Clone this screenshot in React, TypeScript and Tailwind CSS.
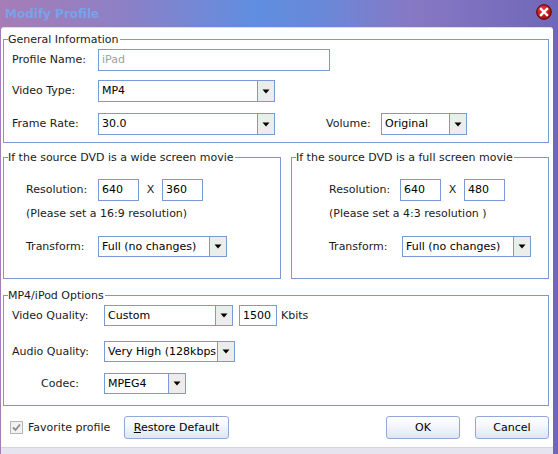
import React from "react";

const font = { fontFamily: '"DejaVu Sans", Verdana, sans-serif' };

function Arrow() {
  return (
    <svg width="8" height="5" viewBox="0 0 8 5">
      <polygon points="0.5,0.5 7.5,0.5 4,4.5" fill="#000" />
    </svg>
  );
}

function Select({ w, h, text }: { w: string; h: string; text: string }) {
  return (
    <div className={`flex border border-[#7a9ad6] bg-white ${w} ${h}`}>
      <div className="flex-1 overflow-hidden whitespace-nowrap pl-[3px] flex items-center text-[11px] text-black">{text}</div>
      <div className="w-[17px] shrink-0 bg-[#ececec] border-l border-[#7a9ad6] flex items-center justify-center">
        <Arrow />
      </div>
    </div>
  );
}

function Input({ w, h, text, gray }: { w: string; h: string; text: string; gray?: boolean }) {
  return (
    <div className={`flex items-center border border-[#7a9ad6] bg-white pl-[3px] text-[11px] ${w} ${h} ${gray ? "text-[#a0a0a0]" : "text-black"}`}>
      {text}
    </div>
  );
}

function Group({ title, className, children }: { title: string; className: string; children: React.ReactNode }) {
  return (
    <div className={`relative border border-[#7b98d4] ${className}`}>
      <span className="absolute left-[4px] top-[-7px] bg-white pr-[1px] text-[11px] leading-[14px] text-[#1a1a1a]">{title}</span>
      {children}
    </div>
  );
}

function Button({ w, children }: { w: string; children: React.ReactNode }) {
  return (
    <div className={`h-[23px] ${w} rounded-[3px] border border-[#8fa9d9] bg-[linear-gradient(180deg,#ffffff_0%,#f3f6fb_45%,#dde6f4_100%)] flex items-center justify-center text-[11px] text-black`}>
      {children}
    </div>
  );
}

export default function App() {
  return (
    <div style={font} className="w-[558px] h-[454px] overflow-hidden flex flex-col bg-[linear-gradient(90deg,#a67db6_0%,#8d80c6_22%,#5f8ee0_46%,#6a88d8_58%,#8778c4_74%,#6f67b8_100%)]">
      {/* Title bar */}
      <div className="h-[27px] shrink-0 flex items-center justify-between pl-[5px] pr-[6px]">
        <span className="text-[12px] font-bold text-[#78a2ea] leading-none">Modify Profile</span>
        <svg width="16" height="16" viewBox="0 0 16 16" className="mb-[3px]">
          <defs>
            <radialGradient id="rg" cx="40%" cy="35%" r="70%">
              <stop offset="0%" stopColor="#f04040" />
              <stop offset="100%" stopColor="#a00808" />
            </radialGradient>
          </defs>
          <circle cx="8" cy="8" r="7.3" fill="url(#rg)" stroke="#600000" strokeWidth="1" />
          <path d="M5 5 L11 11 M11 5 L5 11" stroke="#fff" strokeWidth="2.4" strokeLinecap="square" />
        </svg>
      </div>

      {/* Body */}
      <div className="ml-[1px] w-[552px] h-[420px] shrink-0 bg-white rounded-t-[3px] border-t border-[#dcdce8] pl-[2px] pr-[4px] pt-[11px] text-[11px] text-[#1a1a1a] leading-[14px]">
        {/* General Information */}
        <Group title="General Information" className="h-[104px] w-[546px]">
          <div className="pt-[9px] pl-[8px]">
            <div className="flex items-center">
              <span className="w-[86px]">Profile Name:</span>
              <Input w="w-[232px]" h="h-[22px]" text="iPad" gray />
            </div>
            <div className="flex items-center mt-[9px]">
              <span className="w-[86px]">Video Type:</span>
              <Select w="w-[177px]" h="h-[22px]" text="MP4" />
            </div>
            <div className="flex items-center mt-[11px]">
              <span className="w-[86px]">Frame Rate:</span>
              <Select w="w-[177px]" h="h-[22px]" text="30.0" />
              <span className="ml-[51px] w-[55px]">Volume:</span>
              <Select w="w-[86px]" h="h-[22px]" text="Original" />
            </div>
          </div>
        </Group>

        {/* DVD groups */}
        <div className="flex mt-[14px]">
          <Group title="If the source DVD is a wide screen movie" className="h-[122px] w-[278px]">
            <div className="pt-[21px] pl-[22px]">
              <div className="flex items-center">
                <span className="w-[72px]">Resolution:</span>
                <Input w="w-[41px]" h="h-[22px]" text="640" />
                <span className="w-[23px] text-center">X</span>
                <Input w="w-[41px]" h="h-[22px]" text="360" />
              </div>
              <div className="mt-[6px]">(Please set a 16:9 resolution)</div>
              <div className="flex items-center mt-[15px]">
                <span className="w-[72px]">Transform:</span>
                <Select w="w-[129px]" h="h-[21px]" text="Full (no changes)" />
              </div>
            </div>
          </Group>
          <Group title="If the source DVD is a full screen movie" className="ml-[10px] h-[122px] w-[258px]">
            <div className="pt-[21px] pl-[37px]">
              <div className="flex items-center">
                <span className="w-[71px]">Resolution:</span>
                <Input w="w-[41px]" h="h-[22px]" text="640" />
                <span className="w-[23px] text-center">X</span>
                <Input w="w-[41px]" h="h-[22px]" text="480" />
              </div>
              <div className="mt-[6px]">(Please set a 4:3 resolution )</div>
              <div className="flex items-center mt-[15px]">
                <span className="w-[73px]">Transform:</span>
                <Select w="w-[129px]" h="h-[21px]" text="Full (no changes)" />
              </div>
            </div>
          </Group>
        </div>

        {/* MP4/iPod Options */}
        <Group title="MP4/iPod Options" className="mt-[16px] h-[111px] w-[546px]">
          <div className="pt-[9px] pl-[8px]">
            <div className="flex items-center">
              <span className="w-[92px]">Video Quality:</span>
              <Select w="w-[129px]" h="h-[21px]" text="Custom" />
              <Input w="ml-[6px] w-[38px]" h="h-[21px]" text="1500" />
              <span className="ml-[4px]">Kbits</span>
            </div>
            <div className="flex items-center mt-[15px]">
              <span className="w-[92px]">Audio Quality:</span>
              <Select w="w-[131px]" h="h-[21px]" text="Very High (128kbps)" />
            </div>
            <div className="flex items-center mt-[11px]">
              <span className="ml-[29px] w-[63px]">Codec:</span>
              <Select w="w-[82px]" h="h-[21px]" text="MPEG4" />
            </div>
          </div>
        </Group>

        {/* Bottom buttons */}
        <div className="flex items-center mt-[10px] h-[23px] w-[546px]">
          <div className="ml-[7px] w-[114px] flex items-center">
            <div className="w-[13px] h-[13px] border border-[#b5b5b5] bg-[#f2f2f2] flex items-center justify-center">
              <svg width="9" height="9" viewBox="0 0 9 9">
                <path d="M1 4.5 L3.5 7 L8 1.5" stroke="#8a8a8a" strokeWidth="1.8" fill="none" />
              </svg>
            </div>
            <span className="ml-[5px]">Favorite profile</span>
          </div>
          <Button w="w-[105px]">
            <span><span className="underline">R</span>estore Default</span>
          </Button>
          <div className="ml-auto flex">
            <Button w="w-[74px]">OK</Button>
            <div className="ml-[15px]">
              <Button w="w-[74px]">Cancel</Button>
            </div>
          </div>
        </div>
      </div>
      <div className="ml-[1px] w-[552px] flex-1 bg-[#e6e5ef] border-t border-[#d4d3e0]" />
    </div>
  );
}
